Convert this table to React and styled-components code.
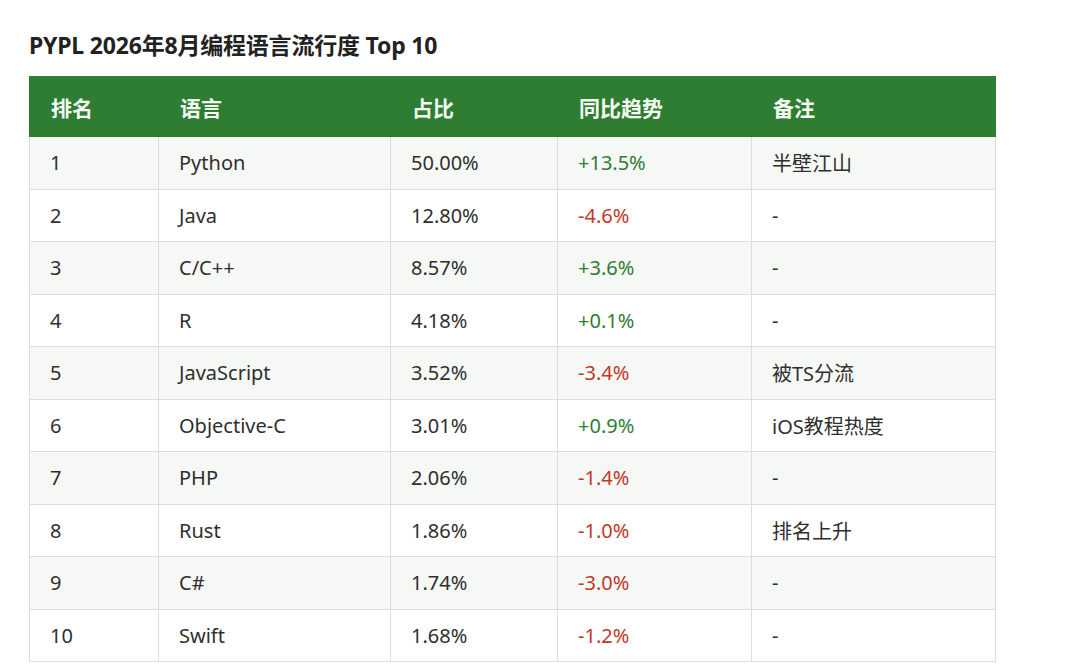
import React from "react";
import styled, { createGlobalStyle } from "styled-components";

const Global = createGlobalStyle`
  html, body { margin: 0; padding: 0; background: #fff; }
  body { font-family: "Noto Sans", "Noto Sans CJK SC", sans-serif; color: #333; }
`;

const Page = styled.div`
  padding: 30px 0 0 29px;
`;

const Title = styled.h2`
  margin: 0 0 16px 0;
  font-size: 23px;
  font-weight: 700;
  color: #222;
  line-height: 30px;
  letter-spacing: -0.2px;
`;

const Table = styled.table`
  border-collapse: collapse;
  width: 966px;
  table-layout: fixed;
`;

const Th = styled.th`
  background: #2e7d32;
  color: #f4fbf2;
  font-size: 21px;
  font-weight: 700;
  text-align: left;
  padding: 0 0 0 21px;
  height: 59px;
  border: 1px solid #2e7d32;
`;

const Row = styled.tr`
  background: ${(p) => (p.$alt ? "#f6f8f5" : "#ffffff")};
`;

const Td = styled.td`
  font-size: 20px;
  color: ${(p) => p.$color || "#2f2f2f"};
  padding: 0 0 0 20px;
  height: 51.5px;
  border: 1px solid #dddddd;
`;

const cols = [129, 232, 167, 194, 244];
const heads = ["排名", "语言", "占比", "同比趋势", "备注"];
const data = [
  ["1", "Python", "50.00%", "+13.5%", "半壁江山"],
  ["2", "Java", "12.80%", "-4.6%", "-"],
  ["3", "C/C++", "8.57%", "+3.6%", "-"],
  ["4", "R", "4.18%", "+0.1%", "-"],
  ["5", "JavaScript", "3.52%", "-3.4%", "被TS分流"],
  ["6", "Objective-C", "3.01%", "+0.9%", "iOS教程热度"],
  ["7", "PHP", "2.06%", "-1.4%", "-"],
  ["8", "Rust", "1.86%", "-1.0%", "排名上升"],
  ["9", "C#", "1.74%", "-3.0%", "-"],
  ["10", "Swift", "1.68%", "-1.2%", "-"],
];

export default function App() {
  return (
    <Page>
      <Global />
      <Title>PYPL 2026年8月编程语言流行度 Top 10</Title>
      <Table>
        <colgroup>
          {cols.map((w, i) => (
            <col key={i} style={{ width: w }} />
          ))}
        </colgroup>
        <thead>
          <tr>
            {heads.map((h) => (
              <Th key={h}>{h}</Th>
            ))}
          </tr>
        </thead>
        <tbody>
          {data.map((r, i) => (
            <Row key={r[0]} $alt={i % 2 === 0}>
              <Td>{r[0]}</Td>
              <Td>{r[1]}</Td>
              <Td>{r[2]}</Td>
              <Td $color={r[3].startsWith("+") ? "#2e7d32" : "#c0392b"}>{r[3]}</Td>
              <Td>{r[4]}</Td>
            </Row>
          ))}
        </tbody>
      </Table>
    </Page>
  );
}
